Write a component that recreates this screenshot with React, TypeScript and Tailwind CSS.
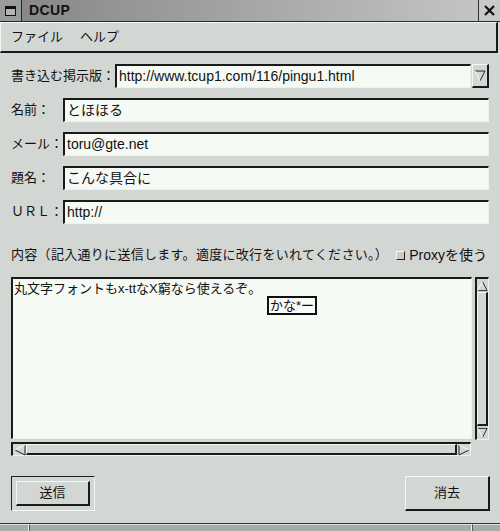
import React from "react";

const jp = { fontFamily: '"Liberation Sans", "Noto Sans CJK JP", sans-serif' };

const sunken =
  "border-t-2 border-l-2 border-t-[#1a1a1a] border-l-[#1a1a1a] border-b border-r border-b-[#eef2ee] border-r-[#eef2ee]";
const raised =
  "border-t border-l border-t-[#f4f8f4] border-l-[#f4f8f4] border-b-2 border-r-2 border-b-[#1a1a1a] border-r-[#1a1a1a]";

function Arrow({ dir }: { dir: "up" | "down" | "left" | "right" }) {
  const pts: Record<string, { light: string; dark: string }> = {
    down: { light: "1,1 6,11", dark: "6,11 11,1 1,1" },
    up: { light: "1,11 6,1", dark: "6,1 11,11 1,11" },
    left: { light: "11,1 1,6", dark: "1,6 11,11 11,1" },
    right: { light: "1,1 11,6", dark: "11,6 1,11 1,1" },
  };
  const p = pts[dir];
  return (
    <svg width="12" height="12" viewBox="0 0 12 12">
      <polyline points={p.dark} fill="none" stroke="#222" strokeWidth="1" />
      <polyline points={p.light} fill="none" stroke="#f8fbf8" strokeWidth="1" />
    </svg>
  );
}

function Field({ label, value, labelW }: { label: string; value: string; labelW: string }) {
  return (
    <div className="flex items-center h-[24px]">
      <div className={`${labelW} text-[13px] text-[#111] shrink-0 whitespace-nowrap`}>{label}</div>
      <div className={`flex-1 h-[24px] bg-[#f5faf5] ${sunken} flex items-center pl-[2px] text-[14px] text-[#111]`}>
        {value}
      </div>
    </div>
  );
}

export default function App() {
  return (
    <div className="w-[500px] h-[531px] bg-[#d3d7d3] flex flex-col overflow-hidden select-none" style={jp}>
      {/* title bar */}
      <div className="h-[22px] flex border-b border-b-[#2a2a2a] bg-gradient-to-r from-[#858585] to-[#c6c8c6]">
        <div className="w-[22px] h-full border-r border-r-[#222] bg-[#9c9c9c] flex items-center justify-center">
          <div className="w-[11px] h-[10px] border border-[#111] border-t-[3px] bg-[#b4b4b4]" />
        </div>
        <div className="flex-1 pl-[7px] flex items-center text-[14px] font-bold text-[#111] tracking-wide">DCUP</div>
        <div className="w-[22px] h-full border-l border-l-[#333] bg-[#c8cac8] flex items-center justify-center">
          <svg width="11" height="11" viewBox="0 0 11 11">
            <path d="M1 1 L10 10 M10 1 L1 10" stroke="#111" strokeWidth="2.2" />
          </svg>
        </div>
      </div>

      {/* menu bar */}
      <div className={`h-[31px] w-[498px] ${raised} flex items-center pl-[10px] gap-[17px] text-[13px] text-[#111]`}>
        <span>ファイル</span>
        <span>ヘルプ</span>
      </div>

      {/* body */}
      <div className="flex-1 pl-[11px] pr-[11px] pt-[11px] flex flex-col">
        <div className="flex items-center h-[24px]">
          <div className="w-[104px] text-[13px] text-[#111] shrink-0 whitespace-nowrap">書き込む掲示版：</div>
          <div className={`flex-1 h-[24px] bg-[#f5faf5] ${sunken} flex items-center pl-[2px] text-[14px] text-[#111]`}>
            http://www.tcup1.com/116/pingu1.html
          </div>
          <div className={`w-[17px] h-[24px] ml-[1px] bg-[#d3d7d3] ${raised} flex items-center justify-center`}>
            <Arrow dir="down" />
          </div>
        </div>
        <div className="flex flex-col gap-[10px] mt-[10px]">
          <Field label="名前：" value="とほほる" labelW="w-[52px]" />
          <Field label="メール：" value="toru@gte.net" labelW="w-[52px]" />
          <Field label="題名：" value="こんな具合に" labelW="w-[52px]" />
          <Field label="ＵＲＬ：" value="http://" labelW="w-[52px]" />
        </div>

        <div className="mt-[21px] h-[20px] flex items-center text-[13px] text-[#111] whitespace-nowrap">
          <span className="tracking-[0.3px]">内容（記入通りに送信します。適度に改行をいれてください。）</span>
          <span className="ml-[8px] w-[9px] h-[9px] border border-t-[#f4f8f4] border-l-[#f4f8f4] border-b-[#222] border-r-[#222] bg-[#c8ccc8]" />
          <span className="ml-[4px] text-[14px]">Proxyを使う</span>
        </div>

        {/* text area + scrollbars */}
        <div className="mt-[12px] flex gap-[3px]">
          <div className="flex flex-col gap-[3px]">
            <div className={`relative w-[461px] h-[162px] bg-[#f5faf5] ${sunken} pl-[1px] pt-[1px] text-[13px] text-[#111] leading-[17px]`}>
              丸文字フォントもx-ttなX窮なら使えるぞ。
              <div className="absolute left-[254px] top-[17px] h-[19px] px-[1px] border-2 border-[#111] bg-[#f8fbf8] text-[13px] leading-[15px] flex items-center">
                かな*ー
              </div>
            </div>
            <div className={`w-[460px] h-[14px] flex ${sunken} border-t border-l bg-[#d3d7d3]`}>
              <div className="w-[13px] h-full flex items-center justify-center">
                <Arrow dir="left" />
              </div>
              <div className={`flex-1 h-full ${raised}`} />
              <div className="w-[13px] h-full flex items-center justify-center">
                <Arrow dir="right" />
              </div>
            </div>
          </div>
          <div className={`w-[14px] h-[163px] flex flex-col ${sunken} border-t border-l bg-[#d3d7d3]`}>
            <div className="h-[13px] flex items-center justify-center">
              <Arrow dir="up" />
            </div>
            <div className={`flex-1 ${raised}`} />
            <div className="h-[13px] flex items-center justify-center">
              <Arrow dir="down" />
            </div>
          </div>
        </div>

        {/* buttons */}
        <div className="mt-[20px] flex justify-between">
          <div className="w-[84px] h-[35px] border border-t-[#222] border-l-[#222] border-b-[#f4f8f4] border-r-[#f4f8f4] flex items-center justify-center">
            <div className={`w-[74px] h-[25px] ${raised} flex items-center justify-center text-[13px] text-[#111]`}>送信</div>
          </div>
          <div className={`w-[85px] h-[35px] ${raised} flex items-center justify-center text-[13px] text-[#111] mr-[-1px]`}>消去</div>
        </div>
      </div>

      {/* status bar */}
      <div className="h-[8px] flex border-t border-t-[#333] bg-[#a8aca8]">
        <div className="w-[29px] h-full border-r border-r-[#f0f0f0] border-t border-t-[#e0e4e0]" />
        <div className="flex-1 h-full border-r border-r-[#f0f0f0] border-t border-t-[#e0e4e0] border-l border-l-[#555]" />
        <div className="w-[28px] h-full border-t border-t-[#e0e4e0] border-l border-l-[#555]" />
      </div>
    </div>
  );
}
